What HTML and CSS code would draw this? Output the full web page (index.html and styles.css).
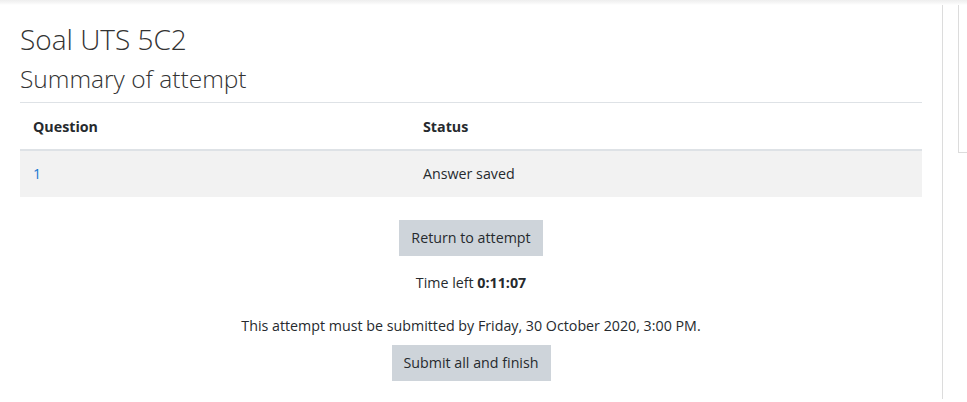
FILE: index.html
```html
<!DOCTYPE html>
<html>
<head>
<meta charset="utf-8">
<link rel="stylesheet" href="styles.css">
</head>
<body>
<div class="topshadow"></div>
<div class="layout">
  <main class="main">
    <h2 class="title">Soal UTS 5C2</h2>
    <h3 class="subtitle">Summary of attempt</h3>
    <table class="summary">
      <thead>
        <tr><th class="col-q">Question</th><th>Status</th></tr>
      </thead>
      <tbody>
        <tr class="row-odd"><td class="col-q"><a href="#" class="qlink">1</a></td><td>Answer saved</td></tr>
      </tbody>
    </table>
    <div class="controls">
      <button class="btn">Return to attempt</button>
      <div class="timeleft">Time left <b>0:11:07</b></div>
      <div class="deadline">This attempt must be submitted by Friday, 30 October 2020, 3:00 PM.</div>
      <button class="btn">Submit all and finish</button>
    </div>
  </main>
  <aside class="side">
    <div class="sidebox"></div>
  </aside>
</div>
</body>
</html>
```

FILE: styles.css
```css
html, body {
  margin: 0;
  padding: 0;
  background: #fff;
}
body {
  font-family: "Open Sans", "Noto Sans", sans-serif;
  color: #262a2e;
  font-size: 14.25px;
  height: 402px;
  overflow: hidden;
}
.topshadow {
  height: 5px;
  background: linear-gradient(#eeeeee, #f7f7f7 60%, #ffffff);
}
.layout {
  display: flex;
  height: 394px;
}
.main {
  width: 902px;
  padding: 0 20px;
  border-right: 1px solid #dcdcdc;
  flex: none;
}
.title {
  margin: 16px 0 0;
  font-weight: 300;
  font-size: 28px;
  line-height: 36px;
  color: #333;
}
.subtitle {
  margin: 6px 0 0;
  font-weight: 300;
  font-size: 24.5px;
  line-height: 32px;
  color: #333;
  padding-bottom: 7px;
  border-bottom: 1px solid #dee2e6;
}
.summary {
  width: 100%;
  border-collapse: collapse;
  font-size: 14.25px;
}
.summary th {
  text-align: left;
  font-weight: 700;
  padding: 12px 13px 11px;
  line-height: 23px;
  border-bottom: 2px solid #dee2e6;
}
.summary td {
  padding: 12px 13px;
  line-height: 22px;
}
.col-q {
  width: 364px;
}
.row-odd {
  background: #f2f2f2;
}
.qlink {
  color: #1177d1;
  text-decoration: none;
}
.controls {
  display: flex;
  flex-direction: column;
  align-items: center;
  padding-top: 23px;
}
.btn {
  font-family: inherit;
  font-size: 14.25px;
  color: #262a2e;
  background: #ced4da;
  border: none;
  border-radius: 0;
  padding: 7px 12px;
  line-height: 22px;
}
.timeleft {
  margin-top: 16px;
  line-height: 22px;
}
.deadline {
  margin-top: 21px;
  line-height: 22px;
}
.deadline + .btn {
  margin-top: 8px;
}
.side {
  flex: 1;
  padding-left: 15px;
  padding-top: 0;
}
.sidebox {
  height: 147px;
  border-left: 1px solid #dcdcdc;
  border-bottom: 1px solid #dcdcdc;
}
```
